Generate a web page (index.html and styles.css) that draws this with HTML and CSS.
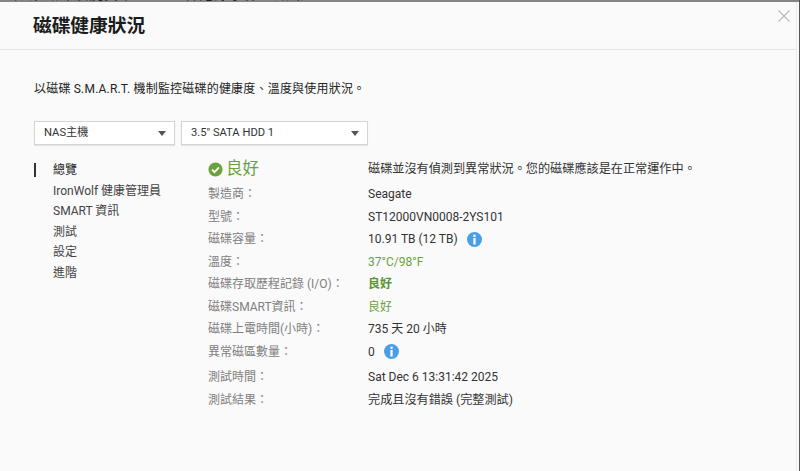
FILE: index.html
```html
<!DOCTYPE html>
<html lang="zh-Hant">
<head>
<meta charset="utf-8">
<title>磁碟健康狀況</title>
<link rel="stylesheet" href="styles.css">
</head>
<body>
<div class="backdrop"><span class="backdrop-text">如果磁碟狀況異常，NAS 會記錄事件，磁碟 1。</span></div>
<main class="dialog">
  <header class="head">
    <h1 class="title">磁碟健康狀況</h1>
    <svg class="close" viewBox="0 0 12 12" aria-label="關閉"><path d="M.5.5l11 11M11.500.5l-11 11"/></svg>
  </header>
  <div class="body">
    <p class="intro">以磁碟 S.M.A.R.T. 機制監控磁碟的健康度、溫度與使用狀況。</p>
    <div class="selects">
      <div class="select select-a"><span>NAS主機</span><i class="caret"></i></div>
      <div class="select select-b"><span>3.5" SATA HDD 1</span><i class="caret"></i></div>
    </div>
    <div class="columns">
      <nav class="nav">
        <a class="nav-item active">總覽</a>
        <a class="nav-item">IronWolf 健康管理員</a>
        <a class="nav-item">SMART 資訊</a>
        <a class="nav-item">測試</a>
        <a class="nav-item">設定</a>
        <a class="nav-item">進階</a>
      </nav>
      <section class="info">
        <div class="row row-status">
          <div class="status"><svg class="check" viewBox="0 0 16 16"><circle cx="8" cy="8" r="7.500"/><path d="M4.300 8.200l2.600 2.600 4.800-5"/></svg><span>良好</span></div>
          <div class="value value-wide">磁碟並沒有偵測到異常狀況。您的磁碟應該是在正常運作中。</div>
        </div>
        <div class="row"><div class="label">製造商：</div><div class="value">Seagate</div></div>
        <div class="row"><div class="label">型號：</div><div class="value">ST12000VN0008-2YS101</div></div>
        <div class="row"><div class="label">磁碟容量：</div><div class="value">10.91 TB (12 TB)<svg class="tip" viewBox="0 0 16 16"><circle cx="8" cy="8" r="8"/><rect x="6.800" y="2.800" width="2.400" height="2.400"/><rect x="6.800" y="6.400" width="2.400" height="7"/></svg></div></div>
        <div class="row"><div class="label">溫度：</div><div class="value green">37°C/98°F</div></div>
        <div class="row"><div class="label">磁碟存取歷程記錄 (I/O)：</div><div class="value green strong">良好</div></div>
        <div class="row"><div class="label">磁碟SMART資訊：</div><div class="value green">良好</div></div>
        <div class="row"><div class="label">磁碟上電時間(小時)：</div><div class="value">735 天 20 小時</div></div>
        <div class="row"><div class="label">異常磁區數量：</div><div class="value">0<svg class="tip" viewBox="0 0 16 16"><circle cx="8" cy="8" r="8"/><rect x="6.800" y="2.800" width="2.400" height="2.400"/><rect x="6.800" y="6.400" width="2.400" height="7"/></svg></div></div>
        <div class="row row-gap"><div class="label">測試時間：</div><div class="value">Sat Dec 6 13:31:42 2025</div></div>
        <div class="row"><div class="label">測試結果：</div><div class="value value-wide">完成且沒有錯誤 (完整測試)</div></div>
      </section>
    </div>
  </div>
</main>
</body>
</html>
```

FILE: styles.css
```css
* { box-sizing: border-box; }
html, body { margin: 0; height: 471px; overflow: hidden; }
body {
  background: #fafafa;
  color: #333;
  font: 12px/22.500px Roboto, "Noto Sans CJK TC", sans-serif;
  display: flex;
  flex-direction: column;
  border-right: 1px solid #555;
}
.backdrop {
  height: 2px;
  background: #858585;
  overflow: hidden;
  flex: none;
  padding-left: 14px;
}
.backdrop-text {
  display: block;
  margin-top: -13px;
  font-size: 14px;
  line-height: 14px;
  letter-spacing: 1px;
  color: #222;
  white-space: nowrap;
}
.dialog { flex: 1; display: flex; flex-direction: column; border-right: 1px solid #ececec; margin-right: 2px; }
.head {
  height: 48px;
  padding: 0 6px 0 33px;
  display: flex;
  justify-content: space-between;
  align-items: flex-start;
  border-bottom: 1px solid #e4e4e4;
}
.title { margin: 11px 0 0; font-size: 18.700px; line-height: 26px; font-weight: 700; color: #1c1c1c; }
.close { width: 12px; height: 12px; margin-top: 8px; fill: none; stroke: #bdbdbd; stroke-width: 1.300; }
.body { padding: 29px 30px 0 34px; }
.intro { margin: 0; line-height: 20px; color: #222; letter-spacing: .2px; }
.selects { display: flex; gap: 6px; margin-top: 22px; }
.select {
  height: 24px;
  padding: 0 8px 0 9px;
  display: flex;
  align-items: center;
  justify-content: space-between;
  background: #fff;
  border: 1px solid #d4d4d4;
  box-shadow: 0 1px 1px rgba(0,0,0,.08);
  font-size: 11.200px;
}
.select-a { width: 141px; }
.select-b { width: 187px; }
.caret { width: 0; height: 0; border: 4px solid transparent; border-top: 5px solid #555; border-bottom: 0; }
.columns { display: flex; margin-top: 10px; }
.nav { width: 174px; display: flex; flex-direction: column; flex: none; padding-top: 5px; }
.nav-item { height: 20.600px; line-height: 20.600px; padding-left: 19px; color: #444; white-space: nowrap; position: relative; }
.nav-item.active { color: #222; }
.nav-item.active::before { content: ""; position: absolute; left: 0; top: 3px; width: 2px; height: 14px; background: #333; }
.info { flex: 1; }
.row { display: flex; height: 22.500px; align-items: center; }
.row-status { height: 28px; }
.row-gap { margin-top: 3px; }
.label { width: 160px; flex: none; color: #808080; white-space: nowrap; }
.value { display: flex; align-items: center; white-space: nowrap; color: #333; }
.value-wide { font-size: 12.150px; }
.status { width: 160px; flex: none; display: flex; align-items: center; gap: 3px; color: #6aa33a; font-size: 16.500px; }
.check { width: 15px; height: 15px; }
.check circle { fill: #6aa33a; }
.check path { fill: none; stroke: #fff; stroke-width: 2; }
.green { color: #6aa33a; }
.strong { font-weight: 700; color: #5c9430; }
.tip { width: 15px; height: 15px; margin-left: 9px; }
.tip circle { fill: #4a9ee8; }
.tip rect { fill: #fff; }
```
